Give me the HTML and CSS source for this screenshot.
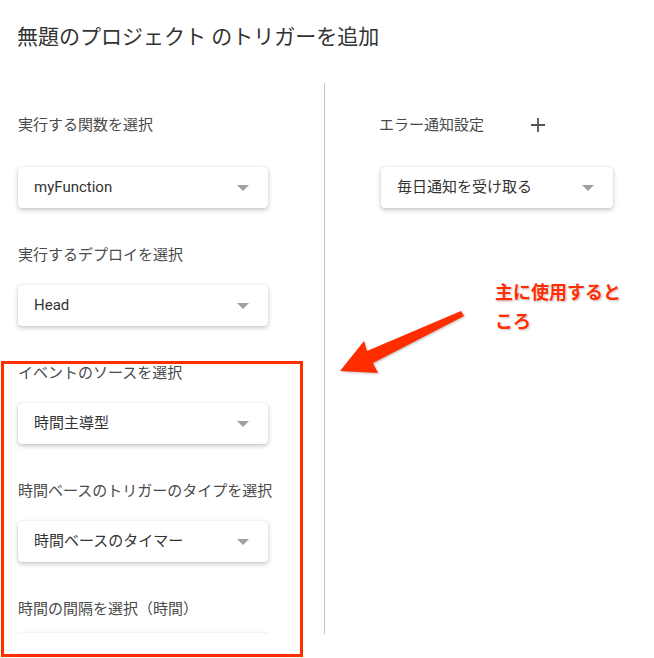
FILE: index.html
```html
<!DOCTYPE html>
<html lang="ja">
<head>
    <meta charset="UTF-8">
    <meta name="viewport" content="width=device-width, initial-scale=1.0">
    <title>トリガーを追加</title>
    <link rel="stylesheet" href="styles.css">
</head>
<body>
    <div class="dialog">
        <h1 class="dialog-title">無題のプロジェクト のトリガーを追加</h1>

        <div class="columns">
            <div class="col col-left">
                <div class="field field-first">
                    <div class="field-label">実行する関数を選択</div>
                    <div class="select">myFunction<span class="caret"></span></div>
                </div>
                <div class="field">
                    <div class="field-label">実行するデプロイを選択</div>
                    <div class="select">Head<span class="caret"></span></div>
                </div>
                <div class="field">
                    <div class="field-label">イベントのソースを選択</div>
                    <div class="select">時間主導型<span class="caret"></span></div>
                </div>
                <div class="field">
                    <div class="field-label">時間ベースのトリガーのタイプを選択</div>
                    <div class="select">時間ベースのタイマー<span class="caret"></span></div>
                </div>
                <div class="field field-last">
                    <div class="field-label">時間の間隔を選択（時間）</div>
                    <div class="select"></div>
                </div>
            </div>

            <div class="col col-right">
                <div class="field field-first">
                    <div class="field-label">
                        エラー通知設定
                        <svg class="plus" width="16" height="16" viewBox="0 0 16 16">
                            <path d="M8 1v14M1 8h14" stroke="#555" stroke-width="1.8" fill="none"/>
                        </svg>
                    </div>
                    <div class="select select-narrow">毎日通知を受け取る<span class="caret"></span></div>
                </div>
            </div>
        </div>
    </div>

    <!-- 注釈 -->
    <div class="note-box"></div>
    <svg class="note-arrow" width="654" height="658" viewBox="0 0 654 658">
        <polygon points="340,371 364,341 367,351 461,311 464,316 373,363 378,373" fill="#ff2d00"/>
    </svg>
    <div class="note-text">主に使用するところ</div>
</body>
</html>
```

FILE: styles.css
```css
body {
    margin: 0;
    font-family: Roboto, "Noto Sans CJK JP", sans-serif;
    background: #fff;
    color: #333;
}
.dialog {
    width: 654px;
}
.dialog-title {
    margin: 0;
    padding: 23px 0 0 17px;
    font-size: 21px;
    line-height: 28px;
    font-weight: 400;
    color: #333;
}
.columns {
    display: flex;
    margin-top: 32px;
    height: 551px;
    overflow: hidden;
}
.col {
    box-sizing: border-box;
    padding-top: 22px;
}
.col-left {
    width: 325px;
    padding-left: 18px;
    border-right: 1px solid #c6c6cc;
}
.col-right {
    padding-left: 56px;
}
.field {
    margin-bottom: 35px;
}
.field-label {
    display: flex;
    align-items: center;
    height: 20px;
    margin-bottom: 22px;
    font-size: 15px;
    color: #4a4a4a;
}
.col-right .field-label {
    margin-left: -2px;
}
.field-first .field-label {
    margin-top: 8px;
    margin-bottom: 34px;
}
.field-last .field-label {
    margin-bottom: 16px;
}
.plus {
    margin-left: 46px;
    margin-top: 4px;
}
.select {
    position: relative;
    box-sizing: border-box;
    width: 250px;
    height: 41px;
    padding-left: 16px;
    line-height: 41px;
    font-size: 15px;
    color: #333;
    background: #fff;
    border-radius: 4px;
    box-shadow: 0 2px 5px rgba(0,0,0,0.22), 0 0 1px rgba(0,0,0,0.2);
}
.select-narrow {
    width: 232px;
}
.caret {
    position: absolute;
    right: 19px;
    top: 18px;
    border-left: 6px solid transparent;
    border-right: 6px solid transparent;
    border-top: 6px solid #a0a0a0;
}
.note-box {
    position: absolute;
    left: 1px;
    top: 361px;
    width: 296px;
    height: 290px;
    border: 3px solid #ff2d00;
}
.note-arrow {
    position: absolute;
    left: 0;
    top: 0;
    pointer-events: none;
    filter: drop-shadow(1px 1px 1px rgba(0,0,0,0.25));
}
.note-text {
    position: absolute;
    left: 495px;
    top: 278px;
    width: 132px;
    font-size: 18px;
    line-height: 29px;
    font-weight: 700;
    color: #ff2d00;
    text-shadow: 0 0 2px #fff, 1px 1px 2px rgba(0,0,0,0.3);
}
```
